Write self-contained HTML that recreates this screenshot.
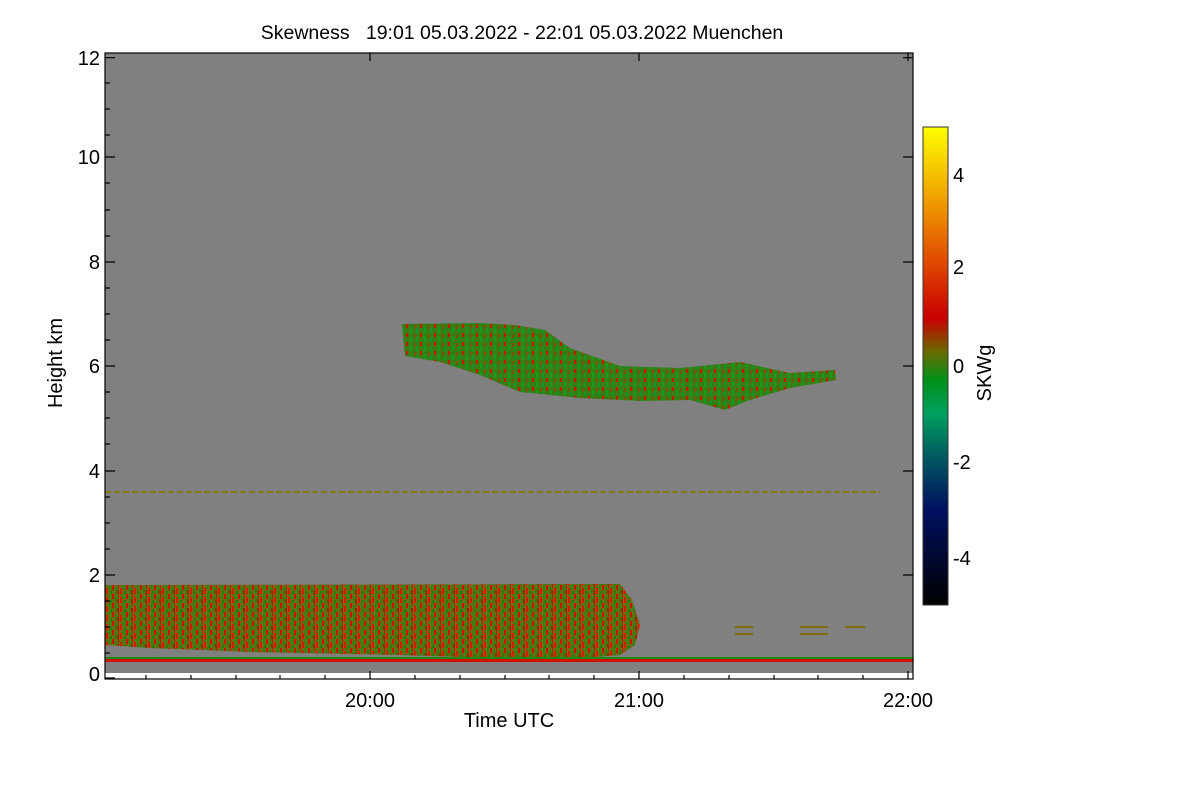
<!DOCTYPE html>
<html><head><style>body{margin:0;background:#fff;}svg{display:block}</style></head><body>
<svg width="1200" height="800" xmlns="http://www.w3.org/2000/svg" font-family="Liberation Sans, sans-serif">
<defs>
<pattern id="spk" width="14" height="9" patternUnits="userSpaceOnUse">
<rect width="14" height="9" fill="#6e6a12"/>
<rect x="0" y="0" width="2" height="5" fill="#d01000"/>
<rect x="3" y="2" width="2" height="7" fill="#1a8a10"/>
<rect x="6" y="0" width="1" height="4" fill="#c81800"/>
<rect x="8" y="3" width="2" height="6" fill="#d02000"/>
<rect x="11" y="0" width="2" height="5" fill="#208f10"/>
<rect x="5" y="5" width="2" height="4" fill="#c01000"/>
<rect x="12" y="6" width="2" height="3" fill="#1a8010"/>
</pattern>
<pattern id="spk2" width="14" height="9" patternUnits="userSpaceOnUse">
<rect width="14" height="9" fill="#3a7c14"/>
<rect x="0" y="0" width="2" height="4" fill="#c81800"/>
<rect x="4" y="3" width="2" height="6" fill="#159a20"/>
<rect x="8" y="1" width="1" height="4" fill="#b03000"/>
<rect x="10" y="4" width="2" height="5" fill="#12942a"/>
</pattern>
<linearGradient id="cb" x1="0" y1="1" x2="0" y2="0">
<stop offset="0" stop-color="#000"/>
<stop offset="0.2" stop-color="#001060"/>
<stop offset="0.32" stop-color="#006060"/>
<stop offset="0.4" stop-color="#00a060"/>
<stop offset="0.47" stop-color="#00901a"/>
<stop offset="0.53" stop-color="#6a6a00"/>
<stop offset="0.6" stop-color="#c80000"/>
<stop offset="0.72" stop-color="#e04a00"/>
<stop offset="0.85" stop-color="#f0a000"/>
<stop offset="1" stop-color="#ffff00"/>
</linearGradient>
</defs>
<text x="522" y="39" font-size="19.5" text-anchor="middle">Skewness &#160; 19:01 05.03.2022 - 22:01 05.03.2022 Muenchen</text>
<rect x="105" y="53" width="808" height="620" fill="#808080"/>
<path d="M402 324 L480 323 L515 325 L545 330 L570 348 L620 366 L680 368 L740 362 L790 373 L835 370 L836 380 L790 388 L750 400 L725 410 L690 400 L640 401 L580 398 L520 392 L480 375 L440 362 L405 356 Z" fill="url(#spk2)"/>
<path d="M105 585 L620 584 L632 600 L640 625 L635 645 L620 655 L560 660 L400 655 L250 652 L150 648 L105 645 Z" fill="url(#spk)"/>
<rect x="105" y="657" width="808" height="2" fill="#1a8a10"/>
<rect x="105" y="659" width="808" height="3" fill="#d01000"/>
<line x1="105" y1="492" x2="880" y2="492" stroke="#807a10" stroke-width="2" stroke-dasharray="6 3"/>
<g fill="#806a10">
<rect x="735" y="626" width="18" height="2"/><rect x="735" y="633" width="18" height="2"/>
<rect x="800" y="626" width="28" height="2"/><rect x="800" y="633" width="28" height="2"/>
<rect x="845" y="626" width="20" height="2"/>
</g>
<g stroke="#000" stroke-width="1.2" fill="none">
<rect x="105" y="53" width="808" height="626"/>
<path d="M105 57.7h10M105 157h10M105 262h10M105 366h10M105 471h10M105 575h10M105 678h10"/>
<path d="M105 83h5M105 109h5M105 135h5M105 183h5M105 210h5M105 236h5M105 288h5M105 314h5M105 340h5M105 392h5M105 418h5M105 444h5M105 497h5M105 523h5M105 549h5M105 601h5M105 627h5M105 653h5"/>
<path d="M913 57.7h-10M913 157h-10M913 262h-10M913 366h-10M913 471h-10M913 575h-10"/>
<path d="M370 679v-8M639 679v-8M908 679v-8M370 53v8M639 53v8M908 53v8"/>
<path d="M146 679v-4M191 679v-4M236 679v-4M280 679v-4M325 679v-4M415 679v-4M460 679v-4M505 679v-4M549 679v-4M594 679v-4M684 679v-4M729 679v-4M774 679v-4M818 679v-4M863 679v-4"/>
</g>
<g font-size="20" text-anchor="end">
<text x="100" y="65">12</text><text x="100" y="164">10</text><text x="100" y="269">8</text><text x="100" y="373">6</text><text x="100" y="478">4</text><text x="100" y="582">2</text><text x="100" y="681">0</text>
</g>
<g font-size="20" text-anchor="middle">
<text x="370" y="707">20:00</text><text x="639" y="707">21:00</text><text x="908" y="707">22:00</text>
<text x="509" y="727">Time UTC</text>
</g>
<text transform="translate(62 363) rotate(-90)" font-size="20" text-anchor="middle">Height km</text>
<rect x="923" y="127" width="25" height="478" fill="url(#cb)" stroke="#333" stroke-width="1"/>
<g font-size="20">
<text x="953" y="182">4</text><text x="953" y="274">2</text><text x="953" y="373">0</text><text x="953" y="469">-2</text><text x="953" y="565">-4</text>
</g>
<text transform="translate(991 373) rotate(-90)" font-size="20" text-anchor="middle">SKWg</text>
</svg>
</body></html>
